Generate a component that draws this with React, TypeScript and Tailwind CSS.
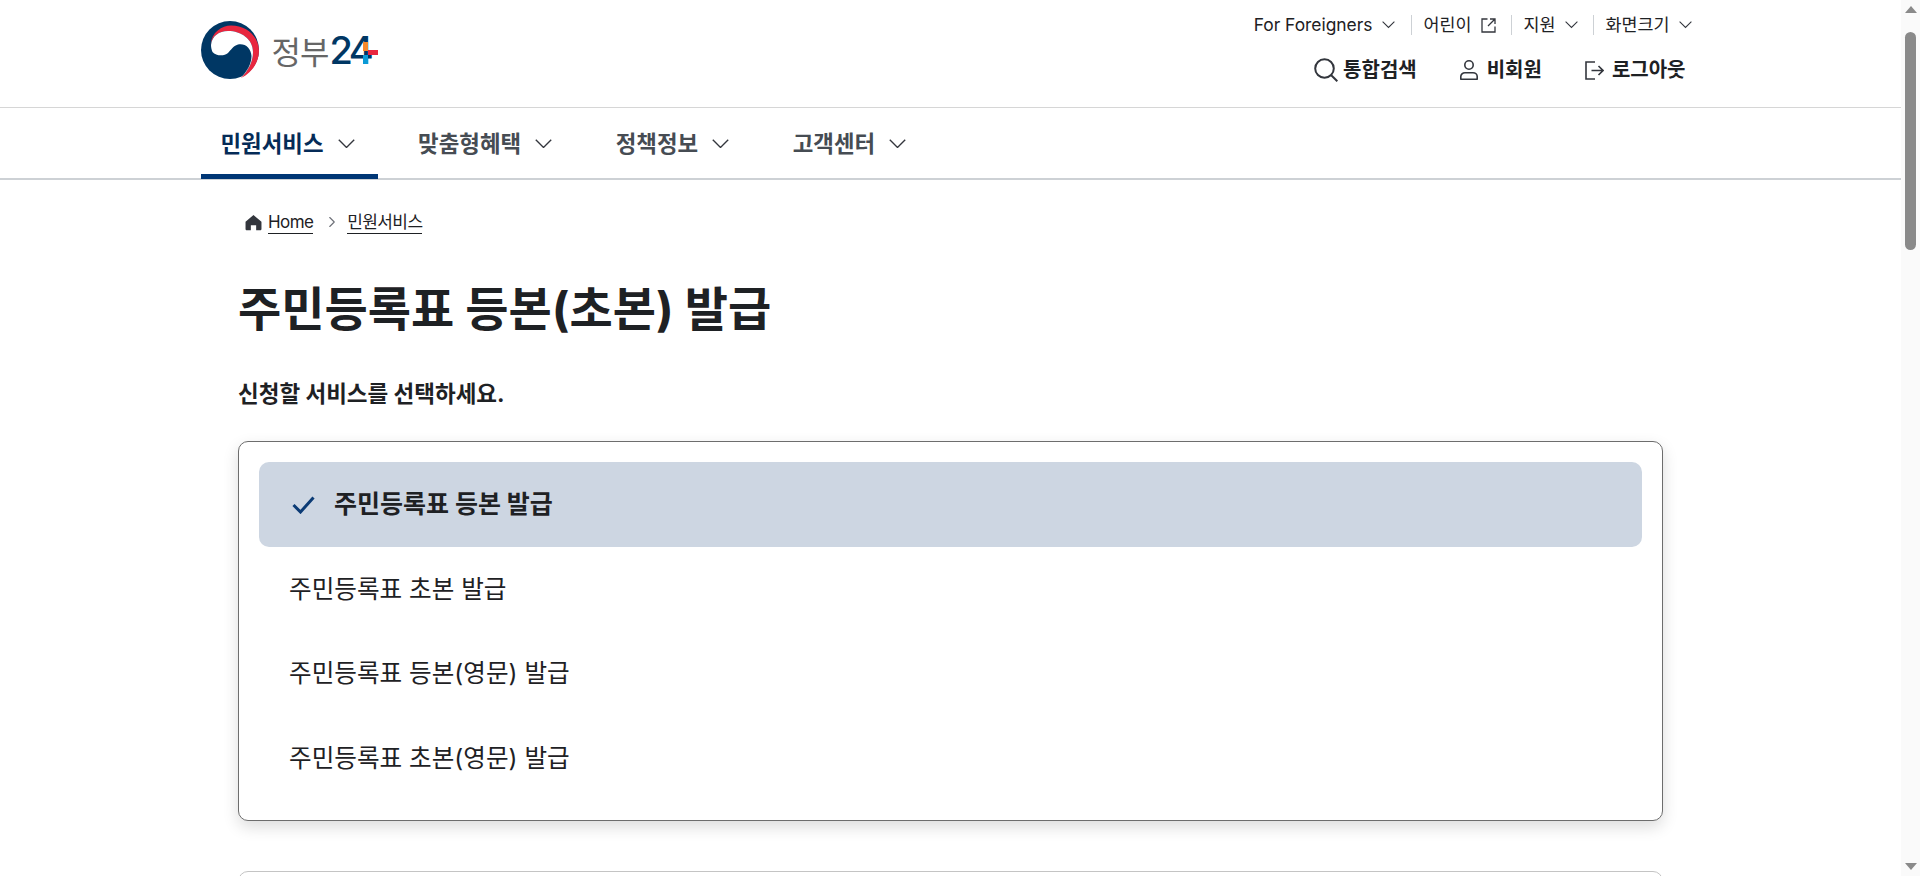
import { ChevronRight } from 'lucide-react';

const font = 'font-["Inter","Noto_Sans_CJK_KR","Noto_Sans",sans-serif]';

function Chevron({ width }: { width: number }) {
  return (
    <svg width={width} height={width * 0.56} viewBox="0 0 16 9" fill="none" stroke="#33363d" strokeWidth="1.3" className="shrink-0">
      <path d="M.7 .7L8 8L15.3 .7" />
    </svg>
  );
}

function Logo() {
  return (
    <div className="flex items-center h-[58px]">
      <svg width="58" height="58" viewBox="0 0 58 58">
        <circle cx="29" cy="29" r="29" fill="#003764" />
        <path d="M9.5 24C10.5 11 21 4.5 30 4.5C46 4.5 58 16 58 30C58 42 50 52 40 57C47 50 52 41 52 31C52 18 40 10 27 10C18 10 11 15 9.5 24Z" fill="#e8273f" />
        <path d="M10 24C11 15 18 10 27 10C40 10 52 18 52 31C52 41 47 50 40 57C46 50 50.5 43 50.5 35C50 27 44 22 37 23.5C32 25 30 29 27 32C23 35.5 15 35 11.5 31C10.5 29 10 26 10 24Z" fill="#fff" />
      </svg>
      <div className="relative flex items-baseline ml-[13px]">
        <span className="text-[32px] leading-none text-[#666] tracking-[-1px]">정부</span>
        <span className="text-[38px] leading-none font-medium text-[#003764] tracking-[-3.5px] ml-[1px]">24</span>
        <span className="absolute right-[-8px] top-[11px] w-[15px] h-[22px]">
          <span className="absolute left-0 top-0 w-[5px] h-[9px] bg-[#f58a2c]" />
          <span className="absolute left-0 top-[13px] w-[5px] h-[9px] bg-[#0b9ad6]" />
          <span className="absolute left-[5px] top-[8px] w-[10px] h-[5px] bg-[#e8273f]" />
        </span>
      </div>
    </div>
  );
}

function SearchIcon() {
  return (
    <svg width="24" height="24" viewBox="0 0 24 24" fill="none" stroke="#33363d" strokeWidth="2">
      <circle cx="10.5" cy="10.5" r="9.3" />
      <path d="M17 17L23.3 23.3" />
    </svg>
  );
}

function UserIcon() {
  return (
    <svg width="18" height="20" viewBox="0 0 18 20" fill="none" stroke="#33363d" strokeWidth="1.6">
      <circle cx="9" cy="5" r="4.2" />
      <path d="M5 12.7H13C15.4 12.7 17.2 14.5 17.2 16.6V19.2H.8V16.6C.8 14.5 2.6 12.7 5 12.7Z" strokeLinejoin="round" />
    </svg>
  );
}

function LogoutIcon() {
  return (
    <svg width="19" height="19" viewBox="0 0 19 19" fill="none" stroke="#33363d" strokeWidth="1.6">
      <path d="M10 1H1V18H10" />
      <path d="M6.5 9.5H18M13.5 5L18 9.5L13.5 14" />
    </svg>
  );
}

function ExternalIcon() {
  return (
    <svg width="15" height="15" viewBox="0 0 15 15" fill="none" stroke="#33363d" strokeWidth="1.3" className="ml-[9px]">
      <path d="M6.5 1H1V14H14V8.5" />
      <path d="M9 1H14V6M14 1L7 8" />
    </svg>
  );
}

function HomeIcon() {
  return (
    <svg width="17" height="17" viewBox="0 0 16 16" fill="#33363d">
      <path d="M8 1L15.5 7.2V14C15.5 14.8 15 15.2 14.2 15.2H10.5V10.5H5.5V15.2H1.8C1 15.2 .5 14.8 .5 14V7.2Z" />
    </svg>
  );
}

function UtilityLinks() {
  return (
    <div className="flex items-center h-[20px] text-[17.4px] text-[#1e2124]">
      <a className="flex items-center gap-[9px]">
        For Foreigners
        <Chevron width={13} />
      </a>
      <span className="w-px h-[20px] bg-[#cdd1d5] ml-[16px] mr-[12px]" />
      <a className="flex items-center">
        어린이
        <ExternalIcon />
      </a>
      <span className="w-px h-[20px] bg-[#cdd1d5] ml-[15px] mr-[12px]" />
      <a className="flex items-center gap-[9px]">
        지원
        <Chevron width={13} />
      </a>
      <span className="w-px h-[20px] bg-[#cdd1d5] ml-[15px] mr-[12px]" />
      <a className="flex items-center gap-[9px]">
        화면크기
        <Chevron width={13} />
      </a>
    </div>
  );
}

function UserLinks() {
  return (
    <div className="flex items-center gap-[43px] text-[20px] font-bold text-[#1e2124]">
      <a className="flex items-center gap-[5px]">
        <SearchIcon />
        통합검색
      </a>
      <a className="flex items-center gap-[9px]">
        <UserIcon />
        비회원
      </a>
      <a className="flex items-center gap-[8px]">
        <LogoutIcon />
        로그아웃
      </a>
    </div>
  );
}

const navItems = ['민원서비스', '맞춤형혜택', '정책정보', '고객센터'];

function Nav() {
  return (
    <nav className="h-[72px] border-b-2 border-[#cdd1d5]">
      <div className="w-[1500px] mx-auto flex h-full gap-[20.6px]">
        {navItems.map((label, i) => (
          <a
            key={label}
            className={`flex items-center gap-[14px] h-[71px] pl-[20px] pr-[23px] text-[22.4px] font-semibold ${
              i === 0 ? 'text-[#052b57] border-b-[5px] border-[#003675] pt-[5px]' : 'text-[#464c53]'
            }`}
          >
            {label}
            <Chevron width={17} />
          </a>
        ))}
      </div>
    </nav>
  );
}

const services = ['주민등록표 초본 발급', '주민등록표 등본(영문) 발급', '주민등록표 초본(영문) 발급'];

function ServiceCard() {
  return (
    <div className="border border-[#6d6d6d] rounded-[10px] p-[20px] bg-white shadow-[0_6px_16px_rgba(0,0,0,0.14)]">
      <div className="h-[85px] rounded-[10px] bg-[#cdd6e2] flex items-center pl-[33px] gap-[19px] text-[25px] font-bold text-[#1e2124]">
        <svg width="23" height="18" viewBox="0 0 23 18" fill="none" stroke="#0b3b75" strokeWidth="3">
          <path d="M1.5 9L8.5 16L21.5 1.5" />
        </svg>
        주민등록표 등본 발급
      </div>
      {services.map(label => (
        <div key={label} className="h-[84.4px] flex items-center pl-[30px] text-[24.6px] text-[#1e2124]">
          {label}
        </div>
      ))}
    </div>
  );
}

function Scrollbar() {
  return (
    <div className="w-[19px] shrink-0 bg-[#fafafa] flex flex-col items-center pt-[6px]">
      <span className="w-0 h-0 border-x-[6.5px] border-x-transparent border-b-[7px] border-b-[#8a8a8a]" />
      <span className="w-[11px] h-[218px] rounded-full bg-[#8a8a8a] mt-[19px]" />
      <span className="mt-auto mb-[6px] w-0 h-0 border-x-[6.5px] border-x-transparent border-t-[7px] border-t-[#8a8a8a]" />
    </div>
  );
}

export default function App() {
  return (
    <div className={`h-[876px] flex overflow-hidden bg-white ${font}`}>
      <div className="flex-1 min-w-0">
        <header className="h-[107px] border-b border-[#d6d6d6] box-content">
          <div className="w-[1500px] mx-auto flex justify-between h-full">
            <div className="pt-[21px]">
              <Logo />
            </div>
            <div className="flex flex-col items-end pt-[15px] pr-[9px] gap-[20px]">
              <UtilityLinks />
              <div className="mr-[6px]">
                <UserLinks />
              </div>
            </div>
          </div>
        </header>
        <Nav />
        <main className="w-[1425px] mx-auto">
          <div className="flex items-center h-[24px] mt-[30px] pl-[7px] text-[17px] text-[#1e2124] tracking-[-0.6px]">
            <HomeIcon />
            <a className="ml-[6px] border-b border-[#1e2124] leading-[22px]">Home</a>
            <ChevronRight size={18} strokeWidth={1.5} className="ml-[10px] mr-[6px] text-[#6d7078]" />
            <a className="border-b border-[#1e2124] leading-[22px]">민원서비스</a>
          </div>
          <h1 className="mt-[47px] text-[47px] leading-[56px] font-bold text-[#1e2124]">주민등록표 등본(초본) 발급</h1>
          <p className="mt-[42px] text-[22.5px] leading-[30px] font-bold text-[#1e2124]">신청할 서비스를 선택하세요.</p>
          <div className="mt-[32px]">
            <ServiceCard />
          </div>
          <div className="mt-[50px] h-[60px] border border-[#c4c4c4] rounded-[10px]" />
        </main>
      </div>
      <Scrollbar />
    </div>
  );
}
